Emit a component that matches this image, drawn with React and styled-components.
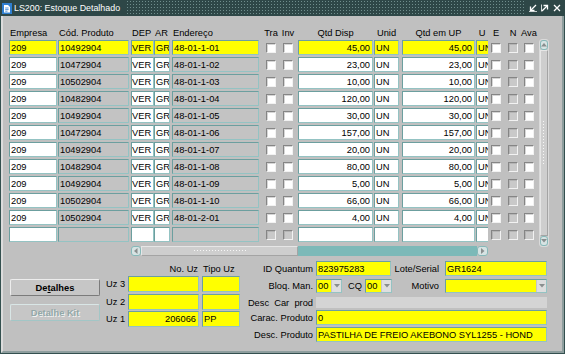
import React from "react";
import styled, { createGlobalStyle, css } from "styled-components";

const YELLOW = "#ffff00";
const BG = "#c0c0c0";
const FIELD_GRAY = "#c3c3c3";

const GlobalStyle = createGlobalStyle`
  html, body {
    margin: 0;
    padding: 0;
    background: ${BG};
  }
  body {
    font-family: "Liberation Sans", Arial, sans-serif;
  }
`;

const COLS = [
  { k: "emp", label: "Empresa", w: 48, ml: 0 },
  { k: "cod", label: "Cód. Produto", w: 71, ml: 1, gray: true },
  { k: "dep", label: "DEP", w: 23, ml: 2, tight: true },
  { k: "ar", label: "AR", w: 16, ml: 0 },
  { k: "end", label: "Endereço", w: 87, ml: 2, gray: true },
  { k: "tra", label: "Tra", w: 10, ml: 7, check: true },
  { k: "inv", label: "Inv", w: 10, ml: 7, check: true },
  { k: "qd", label: "Qtd Disp", w: 75, ml: 5, right: true, center: true },
  { k: "un", label: "Unid", w: 25, ml: 1, center: true },
  { k: "qup", label: "Qtd em UP", w: 73, ml: 3, right: true, center: true },
  { k: "u", label: "U", w: 12, ml: 1, clip: true, center: true },
  { k: "e", label: "E", w: 10, ml: 3, check: true },
  { k: "n", label: "N", w: 10, ml: 7, check: true, off: true },
  { k: "ava", label: "Ava", w: 10, ml: 6, check: true },
];

const mk = (cod, end, qtd) => ({
  emp: "209",
  cod,
  dep: "VER",
  ar: "GR",
  end,
  qd: qtd,
  un: "UN",
  qup: qtd,
  u: "UN",
});

const ROWS = [
  mk("10492904", "48-01-1-01", "45,00"),
  mk("10472904", "48-01-1-02", "23,00"),
  mk("10502904", "48-01-1-03", "10,00"),
  mk("10482904", "48-01-1-04", "120,00"),
  mk("10492904", "48-01-1-05", "30,00"),
  mk("10472904", "48-01-1-06", "157,00"),
  mk("10492904", "48-01-1-07", "20,00"),
  mk("10482904", "48-01-1-08", "80,00"),
  mk("10492904", "48-01-1-09", "5,00"),
  mk("10502904", "48-01-1-10", "66,00"),
  mk("10502904", "48-01-2-01", "4,00"),
  null,
];

const Window = styled.div`
  width: 565px;
  height: 354px;
  box-sizing: border-box;
  display: flex;
  flex-direction: column;
  background: #34504f;
  font-family: "Liberation Sans", Arial, sans-serif;
  font-size: 9.3px;
  color: #000;
  overflow: hidden;
`;

const TitleBar = styled.div`
  flex: none;
  height: 16px;
  display: flex;
  align-items: center;
  background-color: #2e4747;
  background-image: radial-gradient(circle, #6f8d8c 0.7px, transparent 0.95px);
  background-size: 3px 3px;
`;

const TitleText = styled.div`
  height: 100%;
  display: flex;
  align-items: center;
  gap: 2px;
  padding: 0 6px 0 2px;
  background: #2e4747;
  color: #fff;
  font-size: 8.9px;
  white-space: nowrap;
`;

const TitleButtons = styled.div`
  height: 100%;
  margin-left: auto;
  display: flex;
  align-items: center;
  gap: 4px;
  padding: 0 4px 0 4px;
  background: #2e4747;
`;

const Body = styled.div`
  flex: 1;
  display: flex;
  flex-direction: column;
  margin: 0 1px 1px 1px;
  background: ${BG};
  border-left: 2px solid #dcdcdc;
  border-right: 2px solid #8e9e9e;
  border-bottom: 2px solid #8e9e9e;
  padding: 10px 0 0 6px;
`;

const Table = styled.div`
  display: flex;
  align-items: flex-start;
`;

const Grid = styled.div`
  display: flex;
  flex-direction: column;
`;

const HeaderRow = styled.div`
  display: flex;
  height: 13px;
  align-items: center;
`;

const HeaderCell = styled.div`
  flex: none;
  width: ${(p) => p.$w}px;
  margin-left: ${(p) => p.$ml}px;
  display: flex;
  justify-content: ${(p) => (p.$center ? "center" : "flex-start")};
  padding-left: ${(p) => (p.$center ? 0 : 1)}px;
  box-sizing: border-box;
  white-space: nowrap;
`;

const Row = styled.div`
  display: flex;
  align-items: center;
  height: 15px;
  margin-top: ${(p) => (p.$first ? 1 : 2)}px;
`;

const Field = styled.div`
  flex: none;
  box-sizing: border-box;
  width: ${(p) => p.$w}px;
  height: ${(p) => p.$h || 15}px;
  margin-left: ${(p) => p.$ml || 0}px;
  background: ${(p) => p.$bg};
  border: 1px solid;
  border-color: #6c9f9f #94c3c3 #94c3c3 #6c9f9f;
  display: flex;
  align-items: center;
  justify-content: ${(p) => (p.$right ? "flex-end" : "flex-start")};
  padding: 0 ${(p) => (p.$right ? 2 : 0)}px 0 ${(p) => (p.$right ? 0 : p.$tight ? 0 : 1)}px;
  white-space: nowrap;
  overflow: hidden;
  ${(p) =>
    p.$clip &&
    css`
      border-right: none;
      padding-right: 0;
    `}
`;

const Check = styled.div`
  flex: none;
  box-sizing: border-box;
  width: 10px;
  height: 10px;
  margin-left: ${(p) => p.$ml}px;
  background: ${(p) => (p.$off ? "#c9c9c9" : "#fff")};
  border: 1px solid;
  border-color: #858585 #f2f2f2 #f2f2f2 #858585;
  box-shadow: inset 1px 1px 0 ${(p) => (p.$off ? "#b4b4b4" : "#d6d6d6")};
`;

const VScroll = styled.div`
  flex: none;
  width: 10px;
  height: 208px;
  margin: 13px 0 0 5px;
  box-sizing: border-box;
  display: flex;
  flex-direction: column;
  background: #cbcbcb;
  border: 1px solid #dadada;
  border-radius: 3px;
`;

const ScrollBtn = styled.div`
  flex: none;
  box-sizing: border-box;
  width: ${(p) => p.$w}px;
  height: ${(p) => p.$h}px;
  display: flex;
  align-items: center;
  justify-content: center;
  background: #d7e3e3;
  border: 1px solid #86b9b9;
  border-radius: 3px;
`;

const Thumb = styled.div`
  flex: ${(p) => (p.$w ? "none" : 1)};
  width: ${(p) => (p.$w ? `${p.$w}px` : "auto")};
  box-sizing: border-box;
  display: flex;
  align-items: center;
  justify-content: center;
  background: #cecece;
  border: 1px solid;
  border-color: #e6e6e6 #a4a4a4 #a4a4a4 #e6e6e6;
`;

const Grip = styled.div`
  width: ${(p) => p.$w}px;
  height: ${(p) => p.$h}px;
  background-image: radial-gradient(circle, #f7f7f7 0.7px, transparent 0.9px);
  background-size: 3px 3px;
`;

const HScroll = styled.div`
  display: flex;
  width: 357px;
  height: 10px;
  margin: 4px 0 0 122px;
`;

const Track = styled.div`
  flex: 1;
  background: #7cb9b8;
`;

const Bottom = styled.div`
  display: flex;
  align-items: flex-start;
`;

const ButtonCol = styled.div`
  display: flex;
  flex-direction: column;
  margin: 23px 0 0 1px;
`;

const Button = styled.div`
  box-sizing: border-box;
  width: 90px;
  height: 17px;
  margin-top: ${(p) => p.$mt || 0}px;
  display: flex;
  align-items: center;
  justify-content: center;
  font-weight: bold;
  background: #c6c6c6;
  border: 1px solid;
  border-radius: 2px;
  border-color: ${(p) =>
    p.$disabled ? "#d9e6e6 #a2c6c6 #a2c6c6 #d9e6e6" : "#ededed #7b7b7b #7b7b7b #ededed"};
  color: ${(p) => (p.$disabled ? "#93a8a8" : "#000")};
  text-shadow: ${(p) => (p.$disabled ? "1px 1px 0 #f2f2f2" : "none")};
  u {
    text-decoration-thickness: 1px;
    text-underline-offset: 1px;
  }
`;

const UzBlock = styled.div`
  display: flex;
  flex-direction: column;
  margin: 7px 0 0 6px;
`;

const UzHead = styled.div`
  display: flex;
  height: 11px;
  align-items: center;
`;

const UzHeadCell = styled.div`
  width: ${(p) => p.$w}px;
  margin-left: ${(p) => p.$ml || 0}px;
  text-align: ${(p) => p.$align};
  box-sizing: border-box;
  padding: 0 1px;
  white-space: nowrap;
`;

const UzRow = styled.div`
  display: flex;
  align-items: center;
  margin-top: ${(p) => p.$mt}px;
`;

const Label = styled.div`
  flex: none;
  width: ${(p) => p.$w}px;
  margin-left: ${(p) => p.$ml || 0}px;
  text-align: ${(p) => p.$align || "right"};
  white-space: pre;
`;

const Form = styled.div`
  display: flex;
  flex-direction: column;
  margin-top: 5px;
`;

const FormRow = styled.div`
  display: flex;
  align-items: center;
  margin-top: ${(p) => p.$mt || 0}px;
`;

const Combo = styled.div`
  flex: none;
  box-sizing: border-box;
  display: flex;
  width: ${(p) => p.$w}px;
  height: 14px;
  margin-left: ${(p) => p.$ml}px;
  border: 1px solid;
  border-color: #6c9f9f #94c3c3 #94c3c3 #6c9f9f;
  background: ${YELLOW};
`;

const ComboValue = styled.div`
  flex: 1;
  display: flex;
  align-items: center;
  padding-left: 1px;
`;

const ComboBtn = styled.div`
  flex: none;
  width: 9px;
  display: flex;
  align-items: center;
  justify-content: center;
  background: #dedede;
  border-left: 1px solid #c6c6c6;
`;

const Flat = styled.div`
  flex: none;
  width: ${(p) => p.$w}px;
  height: 11px;
  margin-left: ${(p) => p.$ml}px;
  background: #d4d4d4;
`;

const Tri = ({ dir = "down", color = "#8a8f8f" }) => {
  const d = {
    down: "M0 0 L6 0 L3 3.5Z",
    up: "M0 3.5 L6 3.5 L3 0Z",
    left: "M3.5 0 L3.5 6 L0 3Z",
    right: "M0 0 L0 6 L3.5 3Z",
  }[dir];
  const vertical = dir === "up" || dir === "down";
  return (
    <svg width={vertical ? 6 : 4} height={vertical ? 4 : 6} viewBox={vertical ? "0 0 6 4" : "0 0 4 6"}>
      <path d={d} fill={color} />
    </svg>
  );
};

const AppIcon = () => (
  <svg width="10" height="11" viewBox="0 0 10 11">
    <rect x="0" y="0" width="10" height="11" fill="#2f7fd0" />
    <path d="M2 2 H6 L8 4 V9.5 H2Z" fill="#fff" />
    <path d="M3.2 5 H6.6 M3.2 6.6 H6.6 M3.2 8.2 H5.5" stroke="#2f7fd0" strokeWidth="0.8" />
  </svg>
);

const WinIcon = ({ kind }) => (
  <svg width="8" height="8" viewBox="0 0 8 8" fill="none" stroke="#fff" strokeWidth="1.3">
    {kind === "min" && (
      <>
        <path d="M7 1 L2 6" />
        <path d="M1.5 2.5 V6.5 H5.5" />
        <path d="M0 7.6 H8" strokeWidth="0.8" />
      </>
    )}
    {kind === "max" && (
      <>
        <path d="M1 7 L6 2" />
        <path d="M2.5 1.5 H6.5 V5.5" />
        <path d="M0.5 0.5 V7.5" strokeWidth="0.8" />
      </>
    )}
    {kind === "close" && <path d="M1 1 L7 7 M7 1 L1 7" />}
  </svg>
);

function renderCell(c, row, i) {
  if (c.check) {
    return <Check key={c.k} $ml={c.ml} $off={c.off || !row} />;
  }
  let bg = c.gray ? FIELD_GRAY : "#fff";
  if (i === 0) bg = YELLOW;
  return (
    <Field
      key={c.k}
      $w={c.w}
      $ml={c.ml}
      $bg={bg}
      $right={c.right}
      $clip={c.clip}
      $tight={c.tight}
    >
      {row ? row[c.k] : ""}
    </Field>
  );
}

export default function App() {
  return (
    <>
      <GlobalStyle />
      <Window>
        <TitleBar>
          <TitleText>
            <AppIcon />
            LS200: Estoque Detalhado
          </TitleText>
          <TitleButtons>
            <WinIcon kind="min" />
            <WinIcon kind="max" />
            <WinIcon kind="close" />
          </TitleButtons>
        </TitleBar>
        <Body>
          <Table>
            <Grid>
              <HeaderRow>
                {COLS.map((c) => (
                  <HeaderCell key={c.k} $w={c.w} $ml={c.ml} $center={c.check || c.center}>
                    {c.label}
                  </HeaderCell>
                ))}
              </HeaderRow>
              {ROWS.map((r, i) => (
                <Row key={i} $first={i === 0}>
                  {COLS.map((c) => renderCell(c, r, i))}
                </Row>
              ))}
              <HScroll>
                <ScrollBtn $w={10} $h={10}>
                  <Tri dir="left" />
                </ScrollBtn>
                <Thumb $w={157}>
                  <Grip $w={54} $h={4} />
                </Thumb>
                <Track />
                <ScrollBtn $w={11} $h={10}>
                  <Tri dir="right" />
                </ScrollBtn>
              </HScroll>
            </Grid>
            <VScroll>
              <ScrollBtn $w={8} $h={10}>
                <Tri dir="up" />
              </ScrollBtn>
              <Thumb>
                <Grip $w={4} $h={46} />
              </Thumb>
              <ScrollBtn $w={8} $h={10}>
                <Tri dir="down" />
              </ScrollBtn>
            </VScroll>
          </Table>

          <Bottom>
            <ButtonCol>
              <Button>
                De<u>t</u>alhes
              </Button>
              <Button $mt={8} $disabled>
                Detalhe Kit
              </Button>
            </ButtonCol>

            <UzBlock>
              <UzHead>
                <UzHeadCell $w={71} $ml={22} $align="right">
                  No. Uz
                </UzHeadCell>
                <UzHeadCell $w={38} $ml={3} $align="left">
                  Tipo Uz
                </UzHeadCell>
              </UzHead>
              <UzRow $mt={2}>
                <Label $w={18} $align="left">Uz 3</Label>
                <Field $w={71} $h={16} $ml={4} $bg={YELLOW} />
                <Field $w={38} $h={16} $ml={3} $bg={YELLOW} />
              </UzRow>
              <UzRow $mt={2}>
                <Label $w={18} $align="left">Uz 2</Label>
                <Field $w={71} $h={16} $ml={4} $bg={YELLOW} />
                <Field $w={38} $h={16} $ml={3} $bg={YELLOW} />
              </UzRow>
              <UzRow $mt={1}>
                <Label $w={18} $align="left">Uz 1</Label>
                <Field $w={71} $h={16} $ml={4} $bg={YELLOW} $right>
                  206066
                </Field>
                <Field $w={38} $h={16} $ml={3} $bg={YELLOW}>
                  PP
                </Field>
              </UzRow>
            </UzBlock>

            <Form>
              <FormRow>
                <Label $w={73}>ID Quantum</Label>
                <Field $w={75} $ml={3} $bg={YELLOW}>
                  823975283
                </Field>
                <Label $w={48}>Lote/Serial</Label>
                <Field $w={102} $ml={6} $bg={YELLOW}>
                  GR1624
                </Field>
              </FormRow>
              <FormRow $mt={3}>
                <Label $w={73}>Bloq. Man.</Label>
                <Combo $w={26} $ml={3}>
                  <ComboValue>00</ComboValue>
                  <ComboBtn>
                    <Tri />
                  </ComboBtn>
                </Combo>
                <Label $w={14} $ml={6} $align="left">CQ</Label>
                <Combo $w={27} $ml={3}>
                  <ComboValue>00</ComboValue>
                  <ComboBtn>
                    <Tri />
                  </ComboBtn>
                </Combo>
                <Label $w={47}>Motivo</Label>
                <Combo $w={102} $ml={6}>
                  <ComboValue />
                  <ComboBtn>
                    <Tri />
                  </ComboBtn>
                </Combo>
              </FormRow>
              <FormRow $mt={4}>
                <Label $w={73}>{"Desc  Car  prod"}</Label>
                <Flat $w={231} $ml={3} />
              </FormRow>
              <FormRow $mt={2}>
                <Label $w={73}>Carac. Produto</Label>
                <Field $w={231} $ml={3} $bg={YELLOW}>
                  0
                </Field>
              </FormRow>
              <FormRow $mt={2}>
                <Label $w={73}>Desc. Produto</Label>
                <Field $w={231} $ml={3} $bg={YELLOW}>
                  PASTILHA DE FREIO AKEBONO SYL1255 - HOND
                </Field>
              </FormRow>
            </Form>
          </Bottom>
        </Body>
      </Window>
    </>
  );
}
